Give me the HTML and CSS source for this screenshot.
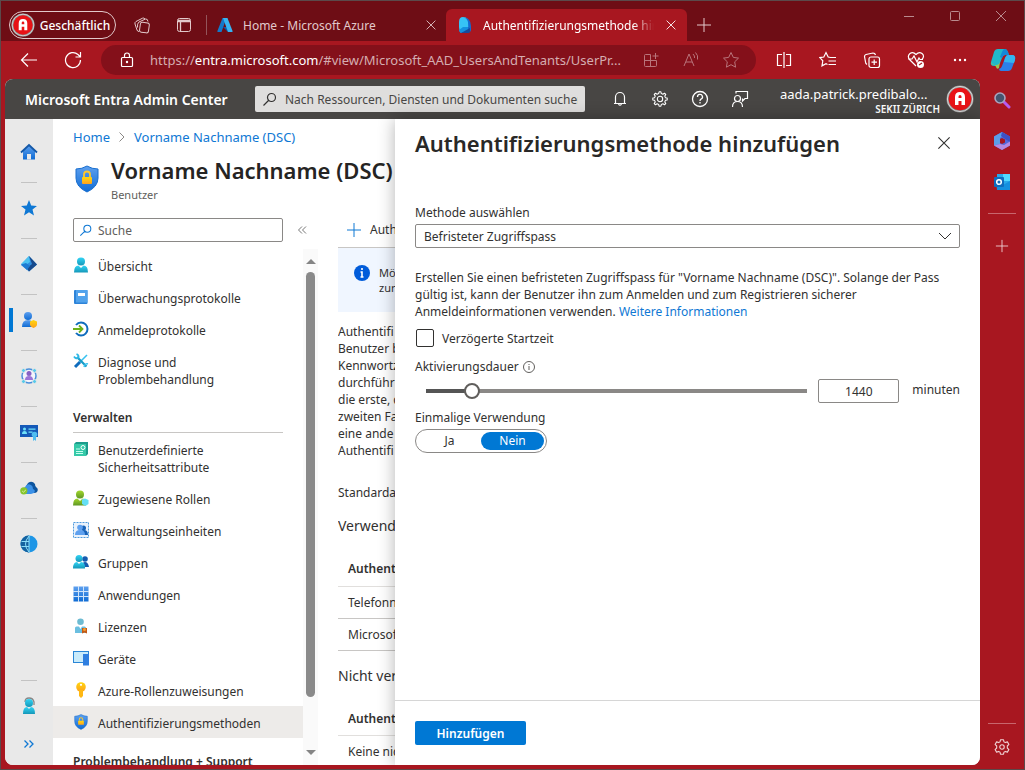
FILE: index.html
```html
<!DOCTYPE html>
<html lang="de">
<head>
<meta charset="utf-8">
<meta name="viewport" content="width=device-width, initial-scale=1">
<title>Authentifizierungsmethode hinzufügen - Microsoft Entra Admin Center</title>
<link rel="stylesheet" href="styles.css">
</head>
<body>
<svg class="defs" aria-hidden="true">
  <defs>
    <linearGradient id="g-blue" x1="0" y1="0" x2="0" y2="1"><stop offset="0" stop-color="#5ea0ef"/><stop offset="1" stop-color="#0f6cd4"/></linearGradient>
    <linearGradient id="g-cyan" x1="0" y1="0" x2="0" y2="1"><stop offset="0" stop-color="#32d4f5"/><stop offset="1" stop-color="#1697b8"/></linearGradient>
    <linearGradient id="g-gold" x1="0" y1="0" x2="0" y2="1"><stop offset="0" stop-color="#ffd70f"/><stop offset="1" stop-color="#fea11b"/></linearGradient>
    <linearGradient id="g-green" x1="0" y1="0" x2="0" y2="1"><stop offset="0" stop-color="#a4d92c"/><stop offset="1" stop-color="#5e9624"/></linearGradient>
  </defs>
  <symbol id="close" viewBox="0 0 16 16"><path d="M3 3l10 10M13 3L3 13" fill="none" stroke="currentColor"/></symbol>
  <symbol id="plus" viewBox="0 0 16 16"><path d="M8 1v14M1 8h14" fill="none" stroke="currentColor"/></symbol>
  <symbol id="search" viewBox="0 0 16 16"><path d="M6.500 9.500L1.500 14.500M9.500 2.500a4 4 0 1 1 0 8a4 4 0 0 1 0-8" fill="none" stroke="currentColor" stroke-width="1.200"/></symbol>
  <symbol id="gear" viewBox="0 0 20 20"><circle cx="10" cy="10" r="2.500" fill="none" stroke="currentColor" stroke-width="1.200"/><path d="M8.300 2h3.400l.5 2.300 1.500.8 2.300-.8 1.700 2.900-1.800 1.700v2.200l1.800 1.700-1.700 2.900-2.300-.8-1.500.8-.5 2.300H8.300l-.5-2.300-1.500-.8-2.300.8-1.700-2.900 1.800-1.700V8.900L2.300 7.200 4 4.300l2.300.8 1.500-.8z" fill="none" stroke="currentColor" stroke-width="1.200" stroke-linejoin="round"/></symbol>
  <symbol id="cog" viewBox="0 0 20 20"><circle cx="10" cy="10" r="3" fill="none" stroke="currentColor" stroke-width="1.200"/><path d="M9 2h2l.5 2 1.700.7 1.800-1.100 1.400 1.400-1.100 1.800.7 1.700 2 .5v2l-2 .5-.7 1.700 1.100 1.800-1.400 1.400-1.800-1.100-1.700.7-.5 2H9l-.5-2-1.700-.7L5 16.400 3.600 15l1.100-1.800-.7-1.700-2-.5V9l2-.5.7-1.700L3.600 5 5 3.600l1.800 1.100L8.500 4z" fill="none" stroke="currentColor" stroke-width="1.200" stroke-linejoin="round"/></symbol>
  <symbol id="avatar" viewBox="0 0 28 28"><circle cx="14" cy="14" r="13.500" fill="#8f8f8f"/><circle cx="14" cy="14" r="12.600" fill="none" stroke="#d8d8d8" stroke-width="1"/><circle cx="14" cy="14" r="11.300" fill="#e81216"/><path d="M9 20v-8q0-5 5-5t5 5v8h-3.500v-4h-3v4zM12.500 13h3v-1.500q0-1.500-1.500-1.500t-1.500 1.500z" fill="#fff" fill-rule="evenodd"/></symbol>
  <symbol id="shield" viewBox="0 0 24 28"><path d="M12 1Q17 4 23 4V13Q23 22 12 27Q1 22 1 13V4Q7 4 12 1" fill="url(#g-blue)" stroke="#1a6fce"/><path d="M9 12V9.500a3 3 0 0 1 6 0V12" fill="none" stroke="#ffc72c" stroke-width="1.800"/><rect x="7" y="12" width="10" height="7" rx="1" fill="url(#g-gold)"/></symbol>
  <symbol id="person" viewBox="0 0 16 16"><path d="M1 15.500Q1 8.500 5.500 8.500L8 11l2.500-2.500Q15 8.500 15 15.500z"/><circle cx="8" cy="4.500" r="4"/></symbol>
</svg>

<div class="window">
<header class="titlebar">
  <button class="profile"><svg width="24" height="24"><use href="#avatar"/></svg><span>Geschäftlich</span></button>
  <button class="tool" aria-label="Arbeitsbereiche"><svg width="18" height="18" viewBox="0 0 18 18" fill="none" stroke="currentColor"><rect x="7" y="6.500" width="9" height="10" rx="2" transform="rotate(8 11 11)"/><path d="M6 15.500Q4.500 15.500 4 14L2 8q-.5-1.500 1-2.500L9.500 2.200q1.500-.7 2.500.8M4.500 11.500q-.5-4 1.500-5.500L12.500 3q2-.5 2.500 2.500"/></svg></button>
  <button class="tool" aria-label="Registerkartenaktionen"><svg width="16" height="16" viewBox="0 0 16 16" fill="none" stroke="currentColor"><rect x="1.500" y="1.500" width="13" height="13" rx="2"/><path d="M2 3.500h12M2 4.500h12M4.500 5v9" stroke-width="1.300"/></svg></button>
  <div class="tab idle">
    <svg width="16" height="16" viewBox="0 0 16 16"><path d="M5.500 1h4L4.500 15H1q-1 0-.6-1z" fill="#1478c8"/><path d="M6 10h6l3.500 4q.5 1-.5 1h-4z" fill="#0b5cab"/><path d="M6 1h4.500l5 13q.3 1-.8 1H11z" fill="#39b4f2"/></svg>
    <span class="tab-title">Home - Microsoft Azure</span>
    <button aria-label="Tab schließen"><svg width="14" height="14"><use href="#close"/></svg></button>
  </div>
  <div class="tab active">
    <svg width="16" height="18" viewBox="0 0 16 18"><path d="M2 11V6q0-5 4-5 5 0 6 5v5l-8 6q-2-2-2-6" fill="#36c3f5"/><path d="M6 1q8 1 8 9v4q0 2-2 2l-2-1q2-4 1-9-1-4-5-5" fill="#1569cf"/><path d="M2 14l4-3h5v4l-6 2H4q-2-1-2-3" fill="#1490df"/><path d="M4 17l9-5v4l-1 1z" fill="#164a9c"/></svg>
    <span class="tab-title">Authentifizierungsmethode hinzufügen</span>
    <button aria-label="Tab schließen"><svg width="14" height="14"><use href="#close"/></svg></button>
  </div>
  <button class="newtab" aria-label="Neuer Tab"><svg width="16" height="16"><use href="#plus"/></svg></button>
  <div class="caption">
    <button aria-label="Minimieren"><svg width="12" height="12" fill="none" stroke="currentColor"><path d="M1 6.500h10"/></svg></button>
    <button aria-label="Maximieren"><svg width="12" height="12" fill="none" stroke="currentColor"><rect x="1.500" y="1.500" width="9" height="9" rx="1"/></svg></button>
    <button aria-label="Schließen"><svg width="16" height="16"><use href="#close"/></svg></button>
  </div>
</header>

<nav class="toolbar">
  <button class="tool" aria-label="Zurück"><svg width="18" height="18" viewBox="0 0 18 18" fill="none" stroke="currentColor" stroke-width="1.200"><path d="M17 9H1.500M8 2.500L1.500 9 8 15.500"/></svg></button>
  <button class="tool" aria-label="Aktualisieren"><svg width="18" height="18" viewBox="0 0 18 18" fill="none" stroke="currentColor" stroke-width="1.200"><path d="M16.500 9A7.500 7.500 0 1 1 14 3.500L16 5.500M16.500 1v5h-5"/></svg></button>
  <div class="address">
    <svg width="14" height="16" viewBox="0 0 14 16" fill="none" stroke="currentColor" stroke-width="1.200"><rect x="1.500" y="5.500" width="11" height="9" rx="1"/><path d="M4.500 5V3.500a2.500 2.500 0 0 1 5 0V5"/><circle cx="7" cy="10" r=".6"/></svg>
    <span class="url">https://<b>entra.microsoft.com</b>/#view/Microsoft_AAD_UsersAndTenants/UserPr...</span>
    <button aria-label="App verfügbar"><svg width="16" height="16" viewBox="0 0 16 16" fill="none" stroke="currentColor"><path d="M7.500 2.500h-5q-1 0-1 1v10q0 1 1 1h10q1 0 1-1v-5h-12M7.500 2.500v12M12.500 1v6M9.500 4h6"/></svg></button>
    <button aria-label="Laut vorlesen"><svg width="18" height="18" viewBox="0 0 18 18" fill="none" stroke="currentColor"><path d="M2 15L7 3l5 12M4 11h6M11 3q2 2 1.500 4M13.500 1.500q3 3 2 7"/></svg></button>
    <button aria-label="Zu Favoriten"><svg width="18" height="18" viewBox="0 0 18 18" fill="none" stroke="currentColor"><path d="M9 1.500l2.300 4.900 5.200.7-3.800 3.700.9 5.400L9 13.700l-4.600 2.500.9-5.400L1.500 7.100l5.200-.7z" stroke-linejoin="round"/></svg></button>
  </div>
  <button class="tool" aria-label="Bildschirm teilen"><svg width="16" height="18" viewBox="0 0 16 18" fill="none" stroke="currentColor" stroke-width="1.200"><path d="M6 3.500H1.500v11H6M8 1v16M10 3.500h4.500v11H10"/></svg></button>
  <button class="tool" aria-label="Favoriten"><svg width="18" height="18" viewBox="0 0 18 18" fill="none" stroke="currentColor" stroke-width="1.200"><path d="M11.500 6.500L9.200 6 7 1.500 4.800 6l-4 .6 3 3.200-.8 5L7 12.700l1.500.8M11 6.500h6M9.500 10h7.500M9.500 13.500h7.500"/></svg></button>
  <button class="tool" aria-label="Sammlungen"><svg width="18" height="18" viewBox="0 0 18 18" fill="none" stroke="currentColor" stroke-width="1.200"><rect x="6" y="6" width="10.500" height="10.500" rx="2"/><path d="M11.200 8.500v5.500M8.500 11.200H14M4 13.500q-1.500-1-1.500-2.500L1.500 5.500q0-1.500 1.500-2l7-1.500q2 0 2.500 2"/></svg></button>
  <button class="tool" aria-label="Browser-Grundlagen"><svg width="18" height="18" viewBox="0 0 18 18" fill="none" stroke="currentColor" stroke-width="1.200"><path d="M9 15L2.500 8.500Q0 5 3 2.500q3-2 6 1 3-3 6-1 3 2.500 0 6M1 8h4l2-3 3 6 2-4 1 1.500h3"/><circle cx="13.500" cy="13.500" r="3.500" fill="currentColor" stroke="none"/><path d="M12 14l3-2" stroke="#a81720"/></svg></button>
  <button class="tool" aria-label="Einstellungen und mehr"><svg width="16" height="4" fill="currentColor"><circle cx="3" cy="2" r="1.200"/><circle cx="8" cy="2" r="1.200"/><circle cx="13" cy="2" r="1.200"/></svg></button>
  <button class="tool copilot" aria-label="Copilot"><svg width="26" height="24" viewBox="0 0 26 24"><path d="M8 1h7q2 0 3 3l1 3h-4q-2 0-3 3l-2 5q-1 3-3 3H4q-4 0-3-4L4 4q1-3 4-3" fill="#21b8c9"/><path d="M1 13q0 4 3 4h3q2 0 3-3l-1 6q-2 2-3-1l-1-2q-4-1-4-4" fill="#9bc451"/><path d="M15 1q2 0 3 3l1 3h-4q-2 0-3 3l-2-1 2-5q1-3 3-3" fill="#1488d8"/><path d="M18 7h4q4 0 3 5l-3 8q-1 3-4 3h-7q-2 0-2-2 2 0 3-3l3-8q1-3 3-3" fill="#2c7fe8"/><path d="M18 7h4q4 0 3 5l-1 3-10-1 1-4q1-3 3-3" fill="#34b5ef"/></svg></button>
</nav>

<div class="body">
<div class="page">
  <header class="portal">
    <strong class="brand">Microsoft Entra Admin Center</strong>
    <label class="global-search"><svg width="16" height="16"><use href="#search"/></svg><input type="text" aria-label="Suche" placeholder="Nach Ressourcen, Diensten und Dokumenten suchen"></label>
    <div class="portal-tools">
      <button aria-label="Benachrichtigungen"><svg width="16" height="18" viewBox="0 0 16 18" fill="none" stroke="currentColor" stroke-width="1.200"><path d="M2 13.500h12M3.500 13V7a4.500 4.500 0 0 1 9 0v6M6.500 14q1.500 2.500 3 0"/></svg></button>
      <button aria-label="Einstellungen"><svg width="18" height="18"><use href="#cog"/></svg></button>
      <button aria-label="Hilfe"><svg width="18" height="18" viewBox="0 0 18 18" fill="none" stroke="currentColor" stroke-width="1.300"><circle cx="9" cy="9" r="7.500"/><path d="M6.500 7a2.500 2.500 0 1 1 3.500 2.200Q9 9.700 9 11M9 12v1.500"/></svg></button>
      <button aria-label="Feedback"><svg width="18" height="18" viewBox="0 0 18 18" fill="none" stroke="currentColor" stroke-width="1.200"><circle cx="6.500" cy="8.500" r="3"/><path d="M1.500 17q0-5.500 5-5.500t5 5.500M5 3.500v-2h11.500v7H14l-2.500 2.500V8.500"/></svg></button>
    </div>
    <div class="account"><span>aada.patrick.predibalo...</span><small>SEKII ZÜRICH</small></div>
    <svg class="account-pic" width="28" height="28"><use href="#avatar"/></svg>
  </header>

  <div class="portal-body">
    <nav class="rail" aria-label="Portal">
      <a href="#" aria-label="Home"><svg width="18" height="18" viewBox="0 0 18 18"><path d="M3 8l6-6 6 6v8.500H3z" fill="url(#g-blue)"/><path d="M7 11h4v5.500H7z" fill="#e9e9e9"/><path d="M1 9.500L9 2l8 7.500" fill="none" stroke="#1559a8" stroke-width="1.800"/></svg></a><hr>
      <a href="#" aria-label="Favoriten"><svg width="18" height="18" viewBox="0 0 18 18"><path d="M9 1l2.200 5.500 5.800.4-4.500 3.700L14 16.500 9 13.300l-5 3.200 1.500-5.900L1 6.900l5.800-.4z" fill="#0f78d4"/></svg></a><hr>
      <a href="#" aria-label="Identität"><svg width="18" height="16" viewBox="0 0 18 16"><path d="M9 0l8 8.500L9 15.500 1 9z" fill="#2f8fe0"/><path d="M9 0L1 8l4 1.500L10 6z" fill="#4cc2f0"/><path d="M9 0l8 8.500L9 15.500 7 12l5-4z" fill="#174a8c"/><path d="M1 8.500L6 7l4 3-3 4z" fill="#1e7bd2"/></svg></a><hr>
      <a href="#" class="current" aria-label="Benutzer"><svg width="18" height="18" viewBox="0 0 18 18"><g fill="url(#g-blue)"><circle cx="8" cy="5" r="4"/><path d="M2 16q0-7 6-7t6 7z"/></g><path d="M10 10.500l3.500-1.500 3.500 1.500v3q0 2-3.500 3.500-3.500-1.500-3.500-3.500z" fill="url(#g-gold)"/></svg></a><hr>
      <a href="#" aria-label="Externe Identitäten"><svg width="18" height="18" viewBox="0 0 18 18"><circle cx="9" cy="9" r="7" fill="#f4f4fb" stroke="#4a8fdb" stroke-width="1.500"/><g fill="#58cbea" stroke="#e9e9e9"><circle cx="3.500" cy="3.500" r="2"/><circle cx="14.500" cy="3.500" r="2"/><circle cx="3.500" cy="14.500" r="2"/><circle cx="14.500" cy="14.500" r="2"/></g><circle cx="9" cy="6.500" r="2.500" fill="#8661c5"/><path d="M5 13q0-4 4-4t4 4z" fill="#9c74d8"/></svg></a><hr>
      <a href="#" aria-label="Nachweise"><svg width="18" height="18" viewBox="0 0 18 18"><rect x="0" y="2" width="18" height="12" fill="#1459b8"/><circle cx="4.500" cy="6" r="1.500" fill="#6fe0f8"/><path d="M2 11q0-3 2.500-3T7 11zM8.500 5.500h7v1.200h-7zM8.500 8.500h4v1.200h-4z" fill="#6fe0f8"/><circle cx="14.500" cy="11.500" r="2.800" fill="#50bdf0"/><path d="M13 13h3v5l-1.500-1.200L13 18z" fill="#50bdf0"/></svg></a><hr>
      <a href="#" aria-label="Berechtigungen"><svg width="18" height="14" viewBox="0 0 18 14"><path d="M6 11q-1-6 2-9 4-3 7 1 0 2 1 3 3 2 1 5-1 1-3 1H9z" fill="#0d559f"/><path d="M3 12q-1-4 2-6 2-4 6-2 2 1 2 4 3 1 1 4l-3 1H5z" fill="#3b91e8"/><circle cx="3.800" cy="9.800" r="3.600" fill="#86c52c"/><path d="M2.200 10l1.200 1.200L5.800 9" fill="none" stroke="#d9f2a8"/></svg></a><hr>
      <a href="#" aria-label="Globaler Zugriff"><svg width="18" height="18" viewBox="0 0 18 18"><circle cx="9" cy="9" r="8.500" fill="#1e96e6"/><path d="M9 .5a8.500 8.500 0 0 0 0 17z" fill="#16629f"/><path d="M9 1q-7 8 0 16M9 1v16M1.500 6.500H9M1.500 11.500H9" fill="none" stroke="#8cdcf8"/></svg></a>
      <hr class="last">
      <a href="#" aria-label="Support"><svg width="16" height="18" viewBox="0 0 16 18"><path d="M4 5Q4 1 8 1t5 4v3" fill="none" stroke="#888" stroke-width="1.300"/><g fill="url(#g-cyan)"><circle cx="8" cy="6" r="4"/><path d="M2 17q0-7 4-7l2 2 2-2q4 0 4 7z"/></g></svg></a>
      <button aria-label="Menü erweitern"><svg width="12" height="10" fill="none" stroke="#0f78d4" stroke-width="1.300"><path d="M1.500 1.500L5 5 1.500 8.500M6.500 1.500L10 5 6.500 8.500"/></svg></button>
    </nav>

    <main class="blade">
      <nav class="crumbs" aria-label="Pfad"><a href="#">Home</a><svg width="8" height="12" fill="none" stroke="#8a8886"><path d="M1.500 1.500L6 6 1.500 10.500"/></svg><a href="#">Vorname Nachname (DSC)</a></nav>
      <div class="blade-head">
        <svg width="24" height="28"><use href="#shield"/></svg>
        <div><h1>Vorname Nachname (DSC)</h1><p>Benutzer</p></div>
      </div>
      <div class="columns">
        <div class="side">
          <div class="side-search">
            <label><svg width="14" height="14"><use href="#search"/></svg><input type="text" placeholder="Suche" aria-label="Menü durchsuchen"></label>
            <button aria-label="Menü einklappen"><svg width="10" height="10" fill="none" stroke="#777"><path d="M5 1.500L1.500 5 5 8.500M9 1.500L5.500 5 9 8.500"/></svg></button>
          </div>
          <div class="side-scroll">
            <div class="menu">
              <a href="#"><svg fill="url(#g-cyan)"><use href="#person"/></svg>Übersicht</a>
              <a href="#"><svg viewBox="0 0 16 16"><rect x="1" y="1" width="13.500" height="14" rx="1" fill="#2d83d8"/><rect x="3" y="1" width="11.500" height="12.500" fill="#52a3ec"/><rect x="5" y="4" width="7" height="3" fill="#fff"/></svg>Überwachungsprotokolle</a>
              <a href="#"><svg viewBox="0 0 16 16" fill="none" stroke-width="2"><path d="M3 4Q5 1.500 8 1.500a6.500 6.500 0 0 1 0 13Q5 14.500 3 12" stroke="#0f6cbd"/><path d="M0 8h9M6 4.500L9.500 8 6 11.500" stroke="#6bb118" stroke-width="1.800"/></svg>Anmeldeprotokolle</a>
              <a href="#"><svg viewBox="0 0 16 16" fill="none"><path d="M14 2L6 10" stroke="#37c2f0" stroke-width="1.600"/><path d="M7 9l-5 5" stroke="#0f6cbd" stroke-width="3"/><path d="M4 4l9.500 9.500" stroke="#199bc6" stroke-width="2.200"/><path d="M1 3.500Q3 6.500 5.500 4.500 6 2 3.500 1" stroke="#2db7e6" stroke-width="1.800"/><path d="M15 11q-3-1-4 3" stroke="#37c2f0" stroke-width="1.500"/></svg>Diagnose und<br>Problembehandlung</a>
              <h2>Verwalten</h2>
              <a href="#"><svg viewBox="0 0 16 16"><path d="M1 3l2-2h12v12l-2 2H1z" fill="#1c9c8c"/><rect x="1" y="3" width="12" height="12" fill="#35c9a8"/><path d="M3 8h4M3 10.500h7M3 12.500h7" stroke="#c5fff0"/><circle cx="10" cy="6.500" r="2" fill="none" stroke="#fff"/></svg>Benutzerdefinierte<br>Sicherheitsattribute</a>
              <a href="#"><svg viewBox="0 0 16 16"><g fill="url(#g-green)"><circle cx="7" cy="4.500" r="4"/><path d="M0 15.500Q0 8.500 4.500 8.500L7 11l2.500-2.500Q14 8.500 13 15.500z"/></g><path d="M9 9.500l3-1 3.500 1.500v4L12.500 16 9 14z" fill="#65dff5"/></svg>Zugewiesene Rollen</a>
              <a href="#"><svg viewBox="0 0 16 16"><rect x=".5" y=".5" width="15" height="15" fill="#e9f2fc" stroke="#4e9add" stroke-dasharray="2 1"/><circle cx="10.500" cy="6" r="2.500" fill="#1762b8"/><path d="M7 13q0-5 4-5t4 5z" fill="#1762b8"/><circle cx="7" cy="5.500" r="2.800" fill="#5ea0ef"/><path d="M2 13q0-5 5-5t5 5z" fill="#5ea0ef"/></svg>Verwaltungseinheiten</a>
              <a href="#"><svg viewBox="0 0 16 16"><circle cx="12" cy="5" r="2.800" fill="#155cb0"/><path d="M9 13q0-5 3-5t4 5z" fill="#155cb0"/><g fill="url(#g-cyan)"><circle cx="6" cy="4.500" r="3.500"/><path d="M0 14.500Q0 8 4 8l2 2 2-2q4.500 0 4 6.500z"/></g></svg>Gruppen</a>
              <a href="#"><svg viewBox="0 0 16 16"><rect x=".5" y=".5" width="15" height="15" fill="url(#g-blue)"/><path d="M5.500 0v16M10.500 0v16M0 5.500h16M0 10.500h16" stroke="#cfe4fa"/></svg>Anwendungen</a>
              <a href="#"><svg viewBox="0 0 16 16"><path d="M2 15V10q0-1.500 1.500-1.500H6L7.500 11 9 8.500h2.500Q13 8.500 13 10v5z" fill="#6bbfe0"/><circle cx="7.500" cy="3.800" r="3.300" fill="#6dbbd2"/><path d="M9 10h5v5.500l-2.500-1-2.500 1z" fill="#c45a16"/><circle cx="11.500" cy="11.500" r="1.500" fill="#f8a030"/></svg>Lizenzen</a>
              <a href="#"><svg viewBox="0 0 16 16"><rect x=".5" y="1.500" width="15" height="11" fill="#c9ebfb" stroke="#2a86d6"/><rect x="10" y="4" width="6" height="11.500" fill="#2f7fe0"/></svg>Geräte</a>
              <a href="#"><svg viewBox="0 0 16 16"><circle cx="8" cy="5" r="4.800" fill="url(#g-gold)"/><path d="M6 8h4v6l-2 2-2-2z" fill="#ffb813"/><circle cx="8" cy="2.800" r="1.100" fill="#fff"/></svg>Azure-Rollenzuweisungen</a>
              <a href="#" class="selected"><svg><use href="#shield"/></svg>Authentifizierungsmethoden</a>
              <h2>Problembehandlung + Support</h2>
            </div>
            <div class="scrollbar"><svg width="10" height="5"><path d="M0 5L5 0l5 5z" fill="#858585"/></svg><i></i><svg width="10" height="5"><path d="M0 0l5 5 5-5z" fill="#858585"/></svg></div>
          </div>
        </div>
        <section class="content">
          <button class="command"><svg width="16" height="16"><use href="#plus"/></svg>Auth</button>
          <div class="notice"><svg width="16" height="16" viewBox="0 0 16 16"><circle cx="8" cy="8" r="8" fill="#015cda"/><path d="M8 3v2M6.500 7H8v5M6.500 12h3" fill="none" stroke="#fff" stroke-width="1.600"/></svg><p>Mö<br>zur</p></div>
          <p class="intro">Authentifi<br>Benutzer b<br>Kennwortz<br>durchführ<br>die erste, d<br>zweiten Fa<br>eine ande<br>Authentifi</p>
          <p class="default">Standarda</p>
          <h3>Verwend</h3>
          <table>
            <thead><tr><th>Authent</th></tr></thead>
            <tbody><tr><td>Telefonn</td></tr><tr><td>Microsof</td></tr></tbody>
          </table>
          <h3>Nicht ver</h3>
          <table>
            <thead><tr><th>Authent</th></tr></thead>
            <tbody><tr><td>Keine nic</td></tr></tbody>
          </table>
        </section>
      </div>
    </main>

    <form class="panel">
      <header><h2>Authentifizierungsmethode hinzufügen</h2><button type="button" aria-label="Schließen"><svg width="18" height="18"><use href="#close"/></svg></button></header>
      <div class="fields">
        <label for="method">Methode auswählen</label>
        <div class="select"><select id="method"><option>Befristeter Zugriffspass</option></select><svg width="14" height="8" fill="none" stroke="#323130"><path d="M1 1l6 6 6-6"/></svg></div>
        <p class="help">Erstellen Sie einen befristeten Zugriffspass für "Vorname Nachname (DSC)". Solange der Pass gültig ist, kann der Benutzer ihn zum Anmelden und zum Registrieren sicherer Anmeldeinformationen verwenden. <a href="#">Weitere Informationen</a></p>
        <label class="check"><input type="checkbox">Verzögerte Startzeit</label>
        <label class="with-info" for="duration">Aktivierungsdauer<svg width="12" height="12" viewBox="0 0 12 12" fill="none" stroke="#605e5c"><circle cx="6" cy="6" r="5.500"/><path d="M6 3v1M6 5v4"/></svg></label>
        <div class="duration">
          <input type="range" id="duration" min="60" max="13400" value="1440">
          <input type="text" class="number" value="1440" aria-label="Aktivierungsdauer in Minuten">
          <span>minuten</span>
        </div>
        <fieldset><legend>Einmalige Verwendung</legend>
          <div class="toggle"><label><input type="radio" name="once"><span>Ja</span></label><label><input type="radio" name="once" checked><span>Nein</span></label></div>
        </fieldset>
      </div>
      <footer><button type="button" class="primary">Hinzufügen</button></footer>
    </form>
  </div>
</div>

<aside class="sidebar">
  <button aria-label="Suchen"><svg width="18" height="18" viewBox="0 0 18 18"><path d="M11 11l5 5" stroke="#b65cf0" stroke-width="3" stroke-linecap="round"/><circle cx="7" cy="7" r="5" fill="#45556f" stroke="#a9a5c0" stroke-width="1.600"/></svg></button>
  <button aria-label="Microsoft 365"><svg width="18" height="18" viewBox="0 0 18 18"><path d="M9 0l8 4.500v9L9 18l-8-4.500v-9z" fill="#5168dc"/><path d="M1 4.500L9 0l3 2-5 4v6l-6 1.500z" fill="#5b9ee8"/><path d="M9 0l8 4.500V10l-5-3-4-3z" fill="#3d51c4"/><path d="M1 13.500L7 12l4 1 6-3.500v4L9 18z" fill="#b58ae0"/><path d="M9 6l3 1.500v3L9 12 7 11V7z" fill="#a81720"/></svg></button>
  <button aria-label="Outlook"><svg width="18" height="18" viewBox="0 0 18 18"><rect x="4" y="1" width="13" height="15" fill="#28a8ea"/><rect x="10" y="1" width="7" height="7" fill="#50d9ff"/><path d="M3 8l7 4 7-4v9H4z" fill="#1490df"/><rect x="1" y="4" width="10" height="10" rx="1" fill="#0f6cbd"/><circle cx="6" cy="9" r="2.300" fill="none" stroke="#fff" stroke-width="1.500"/></svg></button>
  <hr>
  <button aria-label="Hinzufügen"><svg width="14" height="14"><use href="#plus"/></svg></button>
  <hr class="push">
  <button aria-label="Einstellungen"><svg width="18" height="18"><use href="#gear"/></svg></button>
</aside>
</div>
</div>
</body>
</html>
```
FILE: styles.css
```css
* { box-sizing: border-box; }
body {
  margin: 0;
  font-family: "Noto Sans", "Open Sans", sans-serif;
  font-size: 12px;
  line-height: 17px;
  color: #323130;
}
h1, h2, h3, p, hr, fieldset, legend { margin: 0; padding: 0; border: 0; }
button, input, select { font: inherit; color: inherit; }
button { display: flex; align-items: center; justify-content: center; padding: 0; border: 0; background: none; }
a { color: #0f78d4; text-decoration: none; }
svg { flex: none; }
.defs { position: absolute; width: 0; height: 0; }

.window {
  display: flex;
  flex-direction: column;
  height: 100vh;
  background: #a81720;
  border: 1px solid #5b4a4b;
  overflow: hidden;
}

/* browser chrome */
.titlebar { display: flex; flex: none; height: 40px; padding-left: 8px; background: #6e0d15; color: #e2c9cb; }
.profile { align-self: center; gap: 5px; width: 107px; height: 28px; margin-top: 8px; border: 1px solid #e2c9cb; border-radius: 14px; color: #fff; font-size: 12px; font-weight: 500; padding-right: 4px; }
.titlebar > .tool { width: 42px; padding-top: 8px; }
.profile + .tool { margin-left: 5px; }
.tab { display: flex; align-items: center; margin-top: 8px; padding: 0 9px 0 11px; gap: 10px; }
.tab-title { flex: 1; white-space: nowrap; overflow: hidden; font-size: 12px; }
.tab.idle { width: 241px; padding-right: 8px; }
.tab.idle::before { content: ""; width: 1px; height: 20px; background: #93555b; margin-left: -10px; }
.tab.active {
  width: 241px;
  border-radius: 6px 6px 0 0;
  background: #a81720;
  color: #fff;
}
.tab.active .tab-title { -webkit-mask-image: linear-gradient(90deg, #000 88%, transparent); mask-image: linear-gradient(90deg, #000 88%, transparent); }
.newtab { width: 34px; padding-top: 8px; }
.caption { display: flex; margin-left: auto; height: 30px; color: #b98a8e; }
.caption button { width: 46px; }
.toolbar { display: flex; flex: none; align-items: center; height: 38px; padding-left: 6px; color: #fff; }
.toolbar .tool { width: 44px; height: 30px; }
.toolbar .copilot { width: 42px; }
.address {
  display: flex;
  flex: 1;
  align-items: center;
  min-width: 0;
  height: 30px;
  margin: 0 6px;
  padding: 0 5px 0 19px;
  border-radius: 15px;
  background: #84101a;
}
.url { flex: 1; min-width: 0; margin-left: 16px; overflow: hidden; white-space: nowrap; font-size: 13px; color: #d5adb1; }
.url b { font-weight: 400; color: #fff; }
.address button { width: 40px; color: #b9747b; }
.body { display: flex; flex: 1; min-height: 0; padding: 0 0 4px 4px; }
.sidebar { display: flex; flex: none; flex-direction: column; align-items: center; width: 44px; color: #f0d5d7; }
.sidebar button { width: 40px; height: 41px; }
.sidebar hr { width: 28px; height: 1px; margin: 11px 0; background: #c8666d; }
.sidebar .push { margin: auto 0 2px; }
.sidebar .push + button { margin-bottom: -2px; }

/* portal */
.page { display: flex; flex: 1; flex-direction: column; min-width: 0; overflow: hidden; border-radius: 8px; background: #fff; }
.portal { display: flex; flex: none; align-items: center; height: 40px; padding: 0 6px 0 20px; background: #484644; color: #fff; }
.brand { flex: none; width: 230px; font-size: 14px; font-weight: 600; white-space: nowrap; }
.global-search { display: flex; flex: 0 1 330px; align-items: center; gap: 7px; height: 26px; padding: 0 7px; border-radius: 2px; background: #dfdedd; color: #323130; }
.global-search input { flex: 1; min-width: 0; padding: 0; border: 0; background: none; outline: 0; font-size: 12px; }
.portal ::placeholder { color: #484644; opacity: 1; }
.portal-tools { display: flex; margin-left: 15px; }
.portal-tools button { width: 40px; height: 40px; }
.account { display: flex; flex-direction: column; width: 160px; margin-left: auto; padding-top: 3px; font-size: 13px; line-height: 16px; }
.account small { align-self: flex-end; font-size: 10px; font-weight: 600; line-height: 14px; }
.account-pic { margin-left: 6px; }
.portal-body { display: flex; flex: 1; min-height: 0; }
.rail { display: flex; flex: none; flex-direction: column; align-items: center; width: 48px; padding: 21px 0 9px; background: #e9e9e9; }
.rail a, .rail button { display: flex; flex: none; align-items: center; justify-content: center; width: 48px; height: 24px; }
.rail .current { border-left: 4px solid #0078d4; border-right: 4px solid transparent; width: 40px; }
.rail hr { flex: none; width: 16px; height: 1px; margin: 18px 0 13px; background: #c3c3c3; }
.rail .last { margin-top: auto; }
.rail button { margin-top: 14px; }

.blade { display: flex; flex: none; flex-direction: column; width: 342px; overflow: hidden; }
.crumbs { display: flex; align-items: center; gap: 8px; padding: 9px 20px 0; font-size: 13px; line-height: 18px; }
.blade-head { display: flex; gap: 12px; padding: 7px 0 0 22px; white-space: nowrap; }
.blade-head > svg { margin-top: 12px; }
.blade-head h1 { font-size: 22px; font-weight: 600; line-height: 34px; color: #252423; }
.blade-head p { font-size: 11px; line-height: 16px; color: #605e5c; }
.columns { display: flex; flex: 1; min-height: 0; margin-top: 15px; }
.side { display: flex; flex: none; flex-direction: column; width: 265px; }
.side-search { display: flex; flex: none; align-items: center; padding-left: 20px; gap: 14px; }
.side-search label { display: flex; align-items: center; gap: 5px; width: 210px; height: 24px; padding: 0 5px; border: 1px solid #8a8886; border-radius: 2px; color: #0f78d4; }
.side-search input { width: 100%; padding: 0; border: 0; outline: 0; color: #323130; }
.side-search ::placeholder { color: #605e5c; opacity: 1; }
.side-scroll { display: flex; flex: 1; min-height: 0; margin-top: 7px; }
.menu { width: 250px; overflow: hidden; }
.menu a { display: block; min-height: 32px; padding: 9px 0 6px 45px; color: #323130; }
.menu a svg { float: left; width: 16px; height: 16px; margin: -1px 0 0 -25px; }
.menu .selected { background: #edebe9; }
.menu h2 { margin: 0 20px; padding: 15px 0 6px; border-bottom: 1px solid #c8c6c4; font-size: 12px; font-weight: 600; line-height: 17px; white-space: nowrap; }
.scrollbar { display: flex; flex-direction: column; align-items: center; width: 15px; padding: 10px 0; background: #fafafa; }
.scrollbar i { flex: 0 1 425px; width: 9px; margin-top: 8px; border-radius: 5px; background: #8a8a8a; }
.scrollbar svg:last-child { margin-top: auto; }
.content { flex: 1; min-width: 0; margin-left: 20px; overflow: hidden; white-space: nowrap; }
.command { justify-content: flex-start; gap: 8px; width: 100%; height: 30px; padding: 0 8px 6px; border-bottom: 1px solid #c8c6c4; }
.command svg { color: #0f78d4; }
.notice { display: flex; gap: 9px; height: 64px; padding: 17px 16px; background: #f0f6ff; line-height: 15px; font-size: 11px; }
.intro { margin-top: 11px; }
.default { margin-top: 25px; }
h3 { margin-top: 15px; font-size: 14px; font-weight: 400; line-height: 20px; }
table { width: 100%; margin-top: 16px; border-collapse: collapse; }
th, td { height: 32px; padding: 0 0 0 10px; border-bottom: 1px solid #c8c6c4; text-align: left; font-weight: 400; }
th { height: 34px; border-bottom-color: #e1dfdd; font-weight: 600; }

/* context panel beside the blade */
.panel {
  display: flex;
  flex: 1;
  flex-direction: column;
  min-width: 0;
  background: #fff;
  box-shadow: 0 0 16px rgba(0, 0, 0, .3);
  z-index: 1;
}
.panel header { display: flex; align-items: center; justify-content: space-between; padding: 7px 27px 0 20px; }
.panel header h2 { font-size: 22px; font-weight: 600; line-height: 34px; white-space: nowrap; color: #292827; }
.fields { display: flex; flex: 1; flex-direction: column; padding: 44px 20px 0; }
.select { position: relative; display: grid; margin-top: 3px; }
.select select { appearance: none; height: 24px; padding: 0 8px; border: 1px solid #8a8886; border-radius: 2px; background: #fff; }
.select svg { position: absolute; right: 8px; top: 8px; }
.help { margin-top: 21px; }
.check { display: flex; align-items: center; gap: 8px; margin-top: 9px; padding-left: 1px; }
.check input { appearance: none; width: 18px; height: 18px; margin: 0; border: 1px solid #323130; border-radius: 2px; }
.with-info { display: flex; align-items: center; gap: 4px; margin-top: 11px; }
.duration { display: flex; align-items: center; gap: 11px; margin-top: 4px; padding-left: 11px; }
.duration input[type="range"] {
  flex: 1;
  min-width: 0;
  height: 16px;
  margin: 0;
  appearance: none;
  background: linear-gradient(90deg, #555 46px, #8a8886 46px) center / 100% 4px no-repeat;
}
.duration input[type="range"]::-webkit-slider-thumb { appearance: none; width: 16px; height: 16px; border: 2px solid #605e5c; border-radius: 50%; background: #fff; }
.number { width: 81px; height: 24px; padding: 0; border: 1px solid #8a8886; border-radius: 2px; text-align: center; }
.duration span { margin-left: 2px; padding-bottom: 4px; }
fieldset { margin-top: 6px; }
.toggle { display: inline-flex; align-items: center; width: 132px; height: 24px; margin-top: 3px; padding: 0 2px; border: 1px solid #8a8886; border-radius: 12px; }
.toggle label { flex: 1; }
.toggle input { position: absolute; width: 1px; height: 1px; margin: 0; opacity: 0; }
.toggle span { display: block; border-radius: 10px; line-height: 18px; text-align: center; }
.toggle :checked + span { background: #0078d4; color: #fff; }
.panel footer { padding: 20px; border-top: 1px solid #d6d6d6; }
.primary { width: 111px; height: 24px; border-radius: 2px; background: #0078d4; color: #fff; font-weight: 600; }
```
